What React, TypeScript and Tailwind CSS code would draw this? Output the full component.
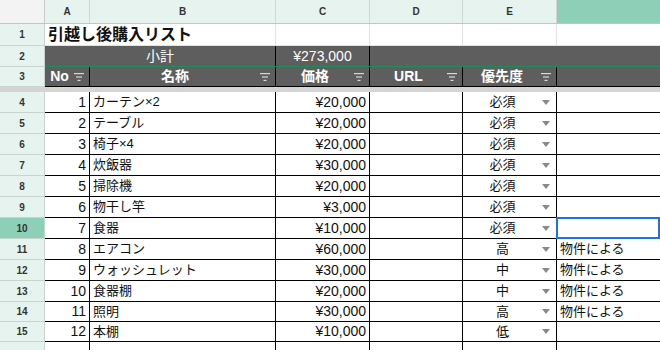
import React from 'react';

const FONT = '"Liberation Sans", "Noto Sans CJK JP", sans-serif';

type Item = {
    no: number;
    name: string;
    price: string;
    priority: string;
    note?: string;
};

const items: Item[] = [
    { no: 1, name: 'カーテン×2', price: '¥20,000', priority: '必須' },
    { no: 2, name: 'テーブル', price: '¥20,000', priority: '必須' },
    { no: 3, name: '椅子×4', price: '¥20,000', priority: '必須' },
    { no: 4, name: '炊飯器', price: '¥30,000', priority: '必須' },
    { no: 5, name: '掃除機', price: '¥20,000', priority: '必須' },
    { no: 6, name: '物干し竿', price: '¥3,000', priority: '必須' },
    { no: 7, name: '食器', price: '¥10,000', priority: '必須' },
    { no: 8, name: 'エアコン', price: '¥60,000', priority: '高', note: '物件による' },
    { no: 9, name: 'ウォッシュレット', price: '¥30,000', priority: '中', note: '物件による' },
    { no: 10, name: '食器棚', price: '¥20,000', priority: '中', note: '物件による' },
    { no: 11, name: '照明', price: '¥30,000', priority: '高', note: '物件による' },
    { no: 12, name: '本棚', price: '¥10,000', priority: '低' },
];

function FilterIcon() {
    return (
        <svg width="10" height="8" viewBox="0 0 10 8" className="shrink-0">
            <rect x="0" y="0" width="10" height="1.2" fill="#d8d8d8" />
            <rect x="2" y="3.4" width="6" height="1.2" fill="#d8d8d8" />
            <rect x="3.5" y="6.8" width="3" height="1.2" fill="#d8d8d8" />
        </svg>
    );
}

function RowNum({ n, active, h }: { n: number; active?: boolean; h: string }) {
    return (
        <div
            className={`w-[45px] shrink-0 ${h} flex items-center justify-center border-r border-b border-[#c9d3d0] text-[10px] font-bold text-[#333] ${active ? 'bg-[#8ecfb7]' : 'bg-[#e7f3ef]'}`}
        >
            {n}
        </div>
    );
}

function HeadCell({ label, w }: { label: string; w: string }) {
    return (
        <div className={`${w} shrink-0 h-full flex items-center pr-5 border-r border-[#000]`}>
            <span className="flex-1 text-center text-[14px] font-bold text-white">{label}</span>
            <span className="-mr-[15px]"><FilterIcon /></span>
        </div>
    );
}

export default function App() {
    return (
        <div className="w-[660px] h-[350px] overflow-hidden bg-white text-[#111]" style={{ fontFamily: FONT }}>
            {/* column letters */}
            <div className="flex h-[24px] border-b border-[#c4c4c4]">
                <div className="w-[45px] shrink-0 bg-[#f3f3f3] border-r border-[#c9c9c9]" />
                {[
                    ['A', 'w-[45px]'],
                    ['B', 'w-[186px]'],
                    ['C', 'w-[94px]'],
                    ['D', 'w-[93px]'],
                    ['E', 'w-[94px]'],
                ].map(([l, w]) => (
                    <div key={l} className={`${w} shrink-0 bg-[#e7f3ef] border-r border-[#cfd8d5] flex items-center justify-center text-[10px] font-bold text-[#333]`}>
                        {l}
                    </div>
                ))}
                <div className="flex-1 bg-[#8ecfb7]" />
            </div>

            {/* row 1 title */}
            <div className="flex h-[22px]">
                <RowNum n={1} h="h-[22px]" />
                <div className="w-[231px] shrink-0 border-r border-b border-[#e2e2e2] flex items-center pl-[3px] text-[16px] font-bold whitespace-nowrap">
                    引越し後購入リスト
                </div>
                <div className="w-[94px] shrink-0 border-r border-b border-[#e2e2e2]" />
                <div className="w-[93px] shrink-0 border-r border-b border-[#e2e2e2]" />
                <div className="w-[94px] shrink-0 border-r border-b border-[#e2e2e2]" />
                <div className="flex-1 border-b border-[#e2e2e2]" />
            </div>

            {/* row 2 subtotal */}
            <div className="flex h-[21px]">
                <RowNum n={2} h="h-[21px]" />
                <div className="flex-1 flex bg-[#5e5e5e] border-b border-[#1f8a5c] text-white text-[14px]">
                    <div className="w-[231px] shrink-0 border-r border-[#000] flex items-center justify-center">小計</div>
                    <div className="w-[94px] shrink-0 border-r border-[#000] flex items-center justify-center">¥273,000</div>
                    <div className="flex-1" />
                </div>
            </div>

            {/* row 3 column labels */}
            <div className="flex h-[20px]">
                <RowNum n={3} h="h-[20px]" />
                <div className="flex-1 flex bg-[#5e5e5e] border-b border-[#000]">
                    <HeadCell label="No" w="w-[45px]" />
                    <HeadCell label="名称" w="w-[186px]" />
                    <HeadCell label="価格" w="w-[94px]" />
                    <HeadCell label="URL" w="w-[93px]" />
                    <HeadCell label="優先度" w="w-[94px]" />
                    <div className="flex-1" />
                </div>
            </div>

            {/* frozen divider */}
            <div className="h-[5px] bg-[#d4d4d4]" />

            {/* data rows */}
            {items.map((it, i) => {
                const h = i >= 10 ? 'h-[20px]' : 'h-[21px]';
                const selected = it.no === 7;
                return (
                    <div key={it.no} className={`flex ${h}`}>
                        <RowNum n={i + 4} h={h} active={selected} />
                        <div className="w-[45px] shrink-0 border-r border-b border-[#000] flex items-center justify-end pr-[3px] text-[14px]">
                            {it.no}
                        </div>
                        <div className="w-[186px] shrink-0 border-r border-b border-[#000] flex items-center pl-[3px] text-[13px] whitespace-nowrap">
                            {it.name}
                        </div>
                        <div className="w-[94px] shrink-0 border-r border-b border-[#000] flex items-center justify-end pr-[3px] text-[14px]">
                            {it.price}
                        </div>
                        <div className="w-[93px] shrink-0 border-r border-b border-[#000]" />
                        <div className="w-[94px] shrink-0 border-r border-b border-[#000] flex items-center pr-5 text-[13px]">
                            <span className="flex-1 text-center">{it.priority}</span>
                            <svg width="8" height="5" viewBox="0 0 8 5" className="-mr-[14px]">
                                <path d="M0 0 L8 0 L4 5 Z" fill="#8a8a8a" />
                            </svg>
                        </div>
                        <div className="flex-1 relative border-b border-[#000] flex items-center pl-[3px] text-[13px] whitespace-nowrap">
                            {it.note}
                            {selected && <div className="absolute -top-px -left-px right-0 bottom-[-1px] border-2 border-[#1a73e8]" />}
                        </div>
                    </div>
                );
            })}
            <div className="flex h-[10px]">
                <div className="w-[45px] shrink-0 bg-[#e7f3ef] border-r border-[#c9d3d0]" />
                <div className="w-[45px] shrink-0 border-r border-[#000]" />
                <div className="w-[186px] shrink-0 border-r border-[#000]" />
                <div className="w-[94px] shrink-0 border-r border-[#000]" />
                <div className="w-[93px] shrink-0 border-r border-[#000]" />
                <div className="w-[94px] shrink-0 border-r border-[#000]" />
            </div>
        </div>
    );
}
